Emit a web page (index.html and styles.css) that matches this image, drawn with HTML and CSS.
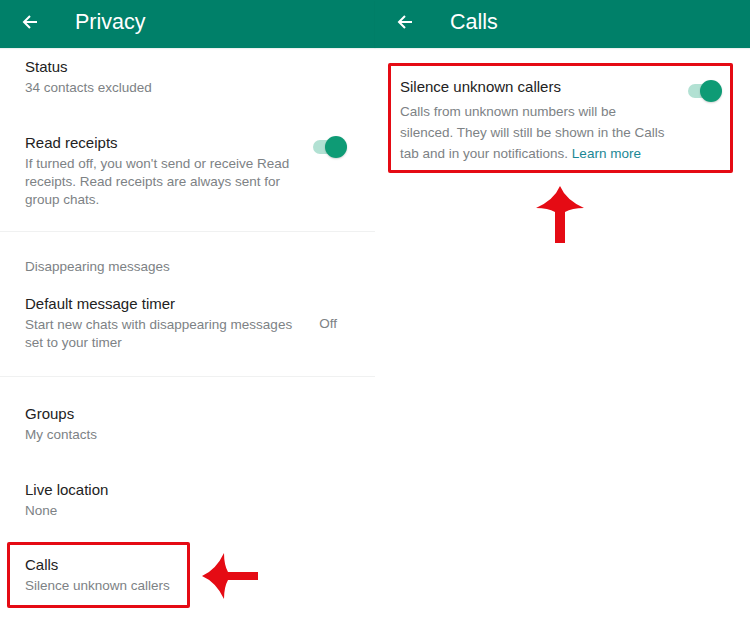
FILE: index.html
```html
<!DOCTYPE html>
<html lang="en">
<head>
  <meta charset="UTF-8" />
  <meta name="viewport" content="width=device-width, initial-scale=1.0"/>
  <title>Privacy | Calls</title>
  <link rel="stylesheet" href="styles.css">
</head>
<body>
  <div class="screens">

    <!-- left: privacy settings -->
    <div class="panel privacy">
      <div class="topbar">
        <svg class="back" viewBox="0 0 16 16"><path d="M15 8H2M8 2L2 8l6 6" /></svg>
        <h1>Privacy</h1>
      </div>

      <div class="section first">
        <div class="item">
          <div class="text">
            <div class="title">Status</div>
            <div class="sub">34 contacts excluded</div>
          </div>
        </div>
        <div class="item">
          <div class="text">
            <div class="title">Read receipts</div>
            <div class="sub">If turned off, you won't send or receive Read receipts. Read receipts are always sent for group chats.</div>
          </div>
          <span class="switch on"></span>
        </div>
      </div>

      <div class="section">
        <div class="section-label">Disappearing messages</div>
        <div class="item centered">
          <div class="text">
            <div class="title">Default message timer</div>
            <div class="sub">Start new chats with disappearing messages set to your timer</div>
          </div>
          <span class="value">Off</span>
        </div>
      </div>

      <div class="section last">
        <div class="item">
          <div class="text">
            <div class="title">Groups</div>
            <div class="sub">My contacts</div>
          </div>
        </div>
        <div class="item">
          <div class="text">
            <div class="title">Live location</div>
            <div class="sub">None</div>
          </div>
        </div>
        <div class="calls-row">
          <div class="highlight calls-box">
            <div class="title">Calls</div>
            <div class="sub">Silence unknown callers</div>
          </div>
          <svg class="arrow-left" viewBox="0 0 56 46"><path d="M0 23Q14 17 22 0Q22 12 26 19L56 19L56 27L26 27Q22 34 22 46Q14 29 0 23Z" /></svg>
        </div>
      </div>
    </div>

    <!-- right: calls settings -->
    <div class="panel calls">
      <div class="topbar">
        <svg class="back" viewBox="0 0 16 16"><path d="M15 8H2M8 2L2 8l6 6" /></svg>
        <h1>Calls</h1>
      </div>

      <div class="highlight silence-box">
        <div class="text">
          <div class="title">Silence unknown callers</div>
          <p class="desc">Calls from unknown numbers will be silenced. They will still be shown in the Calls tab and in your notifications. <a href="#">Learn more</a></p>
        </div>
        <span class="switch on"></span>
      </div>

      <svg class="arrow-up" viewBox="0 0 49 57"><path d="M24 0Q30 14 48 22Q36 22 29 26L29 57L19 57L19 26Q12 22 0 22Q18 14 24 0Z" /></svg>
    </div>

  </div>
</body>
</html>
```

FILE: styles.css
```css
:root {
  --green: #008069;
  --red: #e50b14;
  --title: #222;
  --muted: #7d8285;
  --line: #f0f1f1;
}

* {
  margin: 0;
  padding: 0;
  box-sizing: border-box;
}

body {
  font-family: 'Liberation Sans', Arial, sans-serif;
  background: #fff;
  width: 750px;
  height: 618px;
  overflow: hidden;
}

.screens {
  display: flex;
}

.panel {
  width: 375px;
  height: 618px;
}

.topbar {
  height: 48px;
  background: var(--green);
  display: flex;
  align-items: center;
  padding: 0 0 4px 22px;
  gap: 37px;
  box-shadow: 0 1px 1px rgba(0, 60, 50, 0.08);
}

.topbar h1 {
  color: #fff;
  font-size: 21.5px;
  font-weight: 400;
}

.back {
  width: 16px;
  height: 16px;
  fill: none;
  stroke: #fff;
  stroke-width: 2;
}

/* list sections */
.section {
  border-bottom: 1px solid var(--line);
  padding-bottom: 6px;
}

.section.first {
  padding-top: 9px;
  padding-bottom: 4px;
}

.section.first .item:first-child {
  padding-top: 0;
}

.section.last {
  border-bottom: none;
  padding-top: 9px;
}

.section-label {
  padding: 26px 25px 0;
  font-size: 13.5px;
  line-height: 18px;
  color: var(--muted);
}

.item {
  display: flex;
  align-items: flex-start;
  padding: 18px 28px 18px 25px;
}

.item.centered {
  align-items: center;
  padding-right: 38px;
}

.item .text {
  flex: 1;
  margin-right: 20px;
}

.item.centered .text {
  margin-right: 16px;
}

.title {
  font-size: 15px;
  line-height: 20px;
  color: var(--title);
}

.sub {
  margin-top: 2px;
  font-size: 13.5px;
  line-height: 18px;
  color: var(--muted);
}

.value {
  font-size: 13.5px;
  color: var(--muted);
}

/* toggle */
.switch {
  position: relative;
  flex: none;
  width: 34px;
  height: 22px;
  margin-top: 3px;
}

.switch::before {
  content: "";
  position: absolute;
  left: 0;
  top: 4px;
  width: 28px;
  height: 14px;
  border-radius: 7px;
  background: #b2e1d3;
}

.switch::after {
  content: "";
  position: absolute;
  right: 0;
  top: 0;
  width: 22px;
  height: 22px;
  border-radius: 50%;
  background: #0e9b75;
  box-shadow: 0 1px 2px rgba(0, 0, 0, 0.18);
}

/* red call-outs */
.highlight {
  border: 3px solid var(--red);
  border-radius: 2px;
}

.calls-row {
  display: flex;
  align-items: center;
  gap: 12px;
  margin-top: 4px;
  padding-left: 7px;
}

.calls-box {
  width: 183px;
  padding: 10px 10px 10px 15px;
}

.arrow-left {
  width: 56px;
  height: 46px;
  fill: var(--red);
  margin-top: 2px;
}

.silence-box {
  display: flex;
  align-items: flex-start;
  margin: 15px 17px 0 13px;
  padding: 11px 8px 6px 9px;
}

.silence-box .text {
  flex: 1;
}

.desc {
  width: 265px;
  margin-top: 4px;
  font-size: 13.5px;
  line-height: 21px;
  color: var(--muted);
}

.desc a {
  color: #1b8795;
  text-decoration: none;
}

.arrow-up {
  display: block;
  width: 49px;
  height: 57px;
  fill: var(--red);
  margin: 13px 0 0 161px;
}
```
